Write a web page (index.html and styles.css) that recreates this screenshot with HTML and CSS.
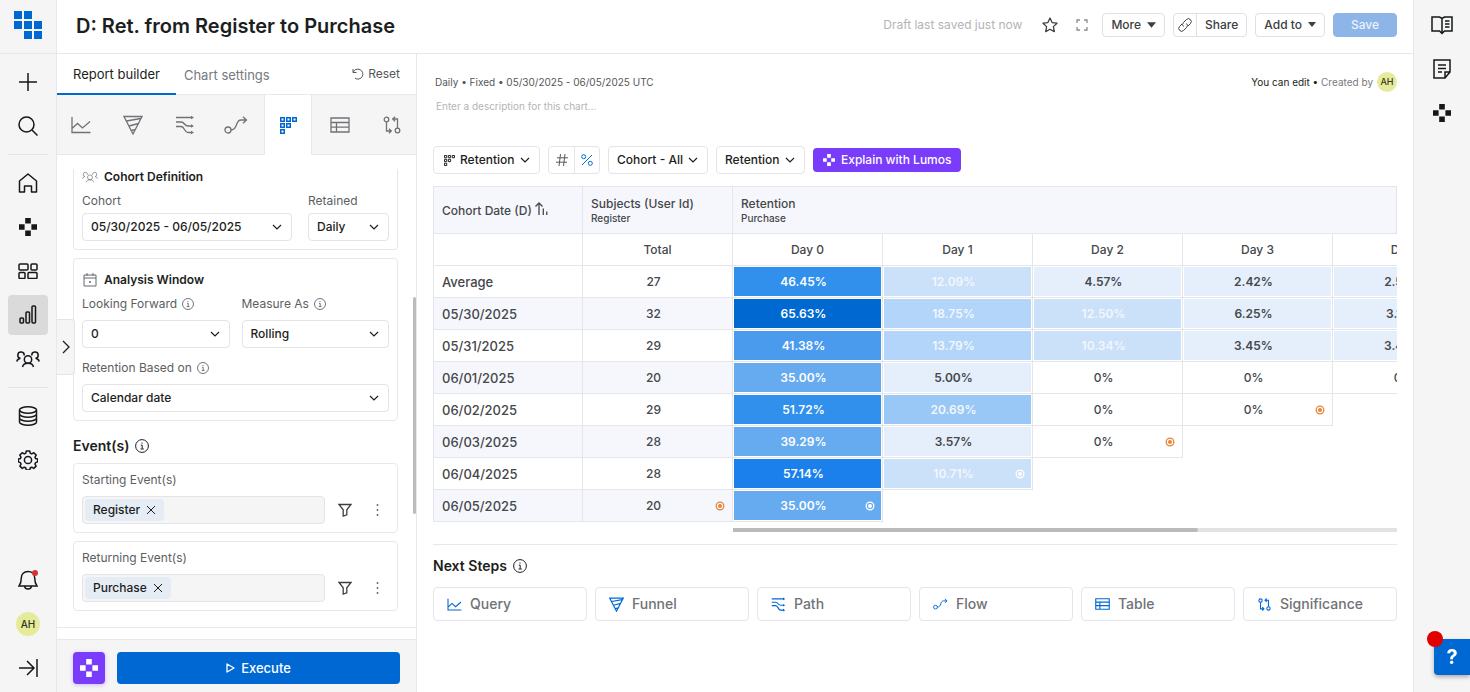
FILE: index.html
```html
<!DOCTYPE html>
<html lang="en">
<head>
  <meta charset="UTF-8">
  <meta name="viewport" content="width=device-width, initial-scale=1.0">
  <title>D: Ret. from Register to Purchase</title>
  <link rel="stylesheet" href="styles.css">
</head>
<body>
  <!-- Shared icons -->
  <svg class="sprite" aria-hidden="true">
    <symbol id="i-lumos" viewBox="0 0 18 18"><path fill="currentColor" d="M6.200 0h5.600v5.600H6.200zM0 6.200h5.600v5.600H0zM12.400 6.200H18v5.600h-5.600zM6.200 12.400h5.600V18H6.200z"/></symbol>
    <symbol id="i-line" viewBox="0 0 20 18"><path d="M1 1v15.500h18.500M1 12.500l5.500-5 5 4.500 7.500-6.500"/></symbol>
    <symbol id="i-funnel" viewBox="0 0 20 20"><path d="M1 1.500h18L10 19zM3.500 6l14-2.500M6 11l9.500-2.500M8.500 15.500l4-1"/></symbol>
    <symbol id="i-path" viewBox="0 0 20 20"><path d="M1 2.500h16M1 7h5c4 0 3 4 7 4h4M1 11.500h5c4 0 3 6 7 6h4"/><path class="fill" d="M16 .8l3 1.700-3 1.700zM16 9.300l3 1.700-3 1.700zM16 15.800l3 1.700-3 1.700z"/></symbol>
    <symbol id="i-flow" viewBox="0 0 24 18"><circle cx="4" cy="14" r="3"/><path d="M7 14c7 0 4-10 10-10h5.500M19 .8L22.500 4 19 7.200"/></symbol>
    <symbol id="i-retention" viewBox="0 0 17 17"><path d="M.75.75h3.500v3.500h-3.500zM6.750.75h3.500v3.500h-3.500zM12.750.75h3.500v3.500h-3.500zM.75 6.750h3.500v3.500h-3.500zM6.750 6.750h3.500v3.500h-3.500zM.75 12.750h3.500v3.500h-3.500z"/></symbol>
    <symbol id="i-table" viewBox="0 0 20 16"><path d="M1 1h18v14H1zM1 5.500h18M1 10.200h18M6.500 5.500V15"/></symbol>
    <symbol id="i-signif" viewBox="0 0 18 18"><circle cx="3.500" cy="3.500" r="2.300"/><circle cx="14.500" cy="14.500" r="2.300"/><path d="M3.500 6v9h4.500M6 12.700L8.300 15 6 17.300M14.500 12V3h-4.500M12 .700L9.700 3 12 5.300"/></symbol>
    <symbol id="i-people" viewBox="0 0 24 18"><circle cx="12" cy="9.500" r="3.700"/><path d="M6.500 17c.5-2.500 2.500-3.800 5.500-3.800s5 1.300 5.500 3.800M8.200 5.500a3.200 3.200 0 1 0-3.800 2.800C2.300 8.700 1.200 9.800.8 11.500M15.800 5.500a3.200 3.200 0 1 1 3.800 2.800c2.100.4 3.200 1.500 3.600 3.200"/></symbol>
    <symbol id="i-info" viewBox="0 0 14 14"><circle cx="7" cy="7" r="6.400"/><path d="M5.800 6.200h1.400v3.600M5.500 10h3.300M7 3.500v1.200"/></symbol>
    <symbol id="i-chevron" viewBox="0 0 10 6"><path d="M1 1l4 4 4-4"/></symbol>
    <symbol id="i-caret" viewBox="0 0 8 5"><path fill="currentColor" d="M0 0h8L4 5z"/></symbol>
    <symbol id="i-filter" viewBox="0 0 14 14"><path d="M1 1.500h12L8.800 6.800v5L5.200 13V6.800z"/></symbol>
    <symbol id="i-dots" viewBox="0 0 3 12"><path fill="currentColor" d="M.75.25h1.500v1.500h-1.500zM.75 5.250h1.500v1.500h-1.500zM.75 10.250h1.500v1.500h-1.500z"/></symbol>
    <symbol id="i-close" viewBox="0 0 10 10"><path d="M1 1l8 8M9 1L1 9"/></symbol>
    <symbol id="i-target" viewBox="0 0 10 10"><circle cx="5" cy="5" r="3.800"/><circle class="fill" cx="5" cy="5" r="2"/></symbol>
  </svg>

  <nav class="sidebar" aria-label="Main">
    <a class="logo" href="#" aria-label="Home page">
      <svg width="28" height="28" viewBox="0 0 28 28"><path d="M0 0h8v8H0zM10 0h8v8h-8zM0 10h8v8H0zM10 10h8v8h-8zM20 10h8v8h-8zM10 20h8v8h-8zM20 20h8v8h-8z"/></svg>
    </a>
    <button class="nav-item" aria-label="New"><svg width="18" height="18" viewBox="0 0 18 18"><path d="M9 0v18M0 9h18"/></svg></button>
    <button class="nav-item" aria-label="Search"><svg width="20" height="20" viewBox="0 0 20 20"><circle cx="8.500" cy="8.500" r="7.500"/><path d="M14 14l5.500 5.500"/></svg></button>
    <hr class="nav-divider">
    <a class="nav-item" href="#" aria-label="Home"><svg width="20" height="20" viewBox="0 0 20 20"><path d="M1.500 8L10 1l8.500 7v11h-5v-6h-7v6h-5z" stroke-linejoin="round"/></svg></a>
    <a class="nav-item" href="#" aria-label="Lumos"><svg width="18" height="18"><use href="#i-lumos"/></svg></a>
    <a class="nav-item" href="#" aria-label="Dashboards"><svg width="20" height="16" viewBox="0 0 20 16"><rect x="1" y="1" width="9" height="6" rx="1"/><rect x="13" y="1" width="6" height="6" rx="1"/><rect x="1" y="9.500" width="6" height="6" rx="1"/><rect x="10" y="9.500" width="9" height="6" rx="1"/></svg></a>
    <a class="nav-item active" href="#" aria-label="Charts"><svg width="18" height="20" viewBox="0 0 18 20"><rect x="1" y="13" width="3.500" height="5" rx="1"/><rect x="7" y="7" width="3.500" height="11" rx="1"/><rect x="13" y="1" width="3.500" height="17" rx="1"/></svg></a>
    <a class="nav-item" href="#" aria-label="Audiences"><svg width="24" height="18"><use href="#i-people"/></svg></a>
    <hr class="nav-divider">
    <a class="nav-item" href="#" aria-label="Data"><svg width="20" height="20" viewBox="0 0 20 20"><ellipse cx="10" cy="4" rx="8.500" ry="3.200"/><path d="M1.500 4v12c0 1.800 3.800 3.200 8.500 3.200s8.500-1.400 8.500-3.200V4M1.500 8c0 1.800 3.800 3.200 8.500 3.200s8.500-1.400 8.500-3.200M1.500 12c0 1.800 3.800 3.200 8.500 3.200s8.500-1.400 8.500-3.200"/></svg></a>
    <a class="nav-item" href="#" aria-label="Settings"><svg width="20" height="20" viewBox="0 0 20 20"><circle cx="10" cy="10" r="3.600"/><path d="M8.300 1h3.400l.6 2.300 1.500.6 2-1.200 2.400 2.400-1.200 2 .6 1.500 2 .5v2.800l-2 .7-.6 1.500 1.100 2-2.300 2.300-2-1.200-1.500.6-.6 2.200H8.300l-.6-2.200-1.500-.6-2 1.200-2.300-2.300 1.100-2-.6-1.500-2-.7V9.100l2-.5.6-1.500-1.200-2 2.400-2.400 2 1.200 1.500-.6z" stroke-linejoin="round"/></svg></a>
    <button class="nav-item nav-bottom" aria-label="Notifications"><svg width="20" height="20" viewBox="0 0 20 20"><path d="M1 16h18c-2-2.500-2.300-4.500-2.300-8 0-4-2.700-6.500-6.700-6.500S3.300 4 3.300 8c0 3.500-.3 5.500-2.300 8zM6.500 16c.3 4 6.700 4 7 0"/></svg><span class="dot"></span></button>
    <button class="nav-item" aria-label="Account"><span class="avatar">AH</span></button>
    <button class="nav-item" aria-label="Expand menu"><svg width="20" height="18" viewBox="0 0 20 18"><path d="M1 9h15M9 2l7 7-7 7M19 0v18"/></svg></button>
  </nav>

  <div class="page">
    <header class="topbar">
      <h1>D: Ret. from Register to Purchase</h1>
      <span class="draft">Draft last saved just now</span>
      <button class="icon-btn" aria-label="Favorite"><svg width="16" height="16" viewBox="0 0 16 16"><path d="M8 1l2.100 4.600 4.900.6-3.600 3.400.9 5L8 12.200l-4.300 2.400.9-5L1 6.200l4.900-.6z" stroke-linejoin="round"/></svg></button>
      <button class="icon-btn muted" aria-label="Full screen"><svg width="12" height="12" viewBox="0 0 12 12"><path d="M1 4V1h3M8 1h3v3M11 8v3H8M4 11H1V8"/></svg></button>
      <button class="btn">More <svg width="9" height="6"><use href="#i-caret"/></svg></button>
      <div class="btn-group">
        <button aria-label="Copy link"><svg width="16" height="16" viewBox="0 0 16 16"><path d="M6.500 9.500a2.800 2.800 0 0 1 0-4l2.800-2.900a2.800 2.800 0 0 1 4.100 4L11 9M9.500 6.500a2.800 2.800 0 0 1 0 4l-2.800 2.900a2.800 2.800 0 0 1-4.100-4L5 7"/></svg></button>
        <button>Share</button>
      </div>
      <button class="btn">Add to <svg width="8" height="5"><use href="#i-caret"/></svg></button>
      <button class="btn save" disabled>Save</button>
    </header>

    <div class="workspace">
      <section class="builder">
        <div class="tabs">
          <button class="tab active">Report builder</button>
          <button class="tab">Chart settings</button>
          <button class="reset"><svg width="12" height="12" viewBox="0 0 12 12"><path d="M1 1v3.500h3.500M1.200 4.300A5 5 0 1 1 3 10.200"/></svg>Reset</button>
        </div>
        <div class="chart-types">
          <button aria-label="Query"><svg width="20" height="18"><use href="#i-line"/></svg></button>
          <button aria-label="Funnel"><svg width="20" height="20"><use href="#i-funnel"/></svg></button>
          <button aria-label="Path"><svg width="20" height="20"><use href="#i-path"/></svg></button>
          <button aria-label="Flow"><svg width="24" height="18"><use href="#i-flow"/></svg></button>
          <button class="active" aria-label="Retention"><svg width="17" height="17"><use href="#i-retention"/></svg></button>
          <button aria-label="Table"><svg width="20" height="16"><use href="#i-table"/></svg></button>
          <button aria-label="Significance"><svg width="18" height="18"><use href="#i-signif"/></svg></button>
        </div>

        <div class="builder-body">
          <div class="card cohort-card">
            <h3><svg width="16" height="12"><use href="#i-people"/></svg>Cohort Definition</h3>
            <div class="fields cohort-fields">
              <div class="field">
                <label for="cohort">Cohort</label>
                <div class="select"><select id="cohort"><option>05/30/2025 - 06/05/2025</option></select><svg width="10" height="6"><use href="#i-chevron"/></svg></div>
              </div>
              <div class="field">
                <label for="retained">Retained</label>
                <div class="select"><select id="retained"><option>Daily</option></select><svg width="10" height="6"><use href="#i-chevron"/></svg></div>
              </div>
            </div>
          </div>

          <div class="card window-card">
            <h3><svg width="14" height="14" viewBox="0 0 14 14"><path d="M1 2h12v11H1zM1 5h12M4 0v3M10 0v3M6.500 8.500h1v1h-1z"/></svg>Analysis Window</h3>
            <div class="fields">
              <div class="field">
                <label for="forward">Looking Forward <svg width="12" height="12"><use href="#i-info"/></svg></label>
                <div class="select"><select id="forward"><option>0</option></select><svg width="10" height="6"><use href="#i-chevron"/></svg></div>
              </div>
              <div class="field">
                <label for="measure">Measure As <svg width="12" height="12"><use href="#i-info"/></svg></label>
                <div class="select"><select id="measure"><option>Rolling</option></select><svg width="10" height="6"><use href="#i-chevron"/></svg></div>
              </div>
              <div class="field wide">
                <label for="based">Retention Based on <svg width="12" height="12"><use href="#i-info"/></svg></label>
                <div class="select"><select id="based"><option>Calendar date</option></select><svg width="10" height="6"><use href="#i-chevron"/></svg></div>
              </div>
            </div>
          </div>

          <h2>Event(s) <svg width="14" height="14"><use href="#i-info"/></svg></h2>

          <div class="card event-card">
            <label for="starting">Starting Event(s)</label>
            <div class="event-row">
              <div class="event-box"><span class="chip">Register <button aria-label="Remove Register"><svg width="10" height="10"><use href="#i-close"/></svg></button></span><input id="starting" type="text"></div>
              <button class="icon-btn" aria-label="Filter"><svg width="14" height="14"><use href="#i-filter"/></svg></button>
              <button class="icon-btn" aria-label="Options"><svg width="3" height="12"><use href="#i-dots"/></svg></button>
            </div>
          </div>
          <div class="card event-card">
            <label for="returning">Returning Event(s)</label>
            <div class="event-row">
              <div class="event-box"><span class="chip">Purchase <button aria-label="Remove Purchase"><svg width="10" height="10"><use href="#i-close"/></svg></button></span><input id="returning" type="text"></div>
              <button class="icon-btn" aria-label="Filter"><svg width="14" height="14"><use href="#i-filter"/></svg></button>
              <button class="icon-btn" aria-label="Options"><svg width="3" height="12"><use href="#i-dots"/></svg></button>
            </div>
          </div>
          <hr class="section-line">
        </div>

        <div class="builder-footer">
          <button class="lumos-btn" aria-label="Ask Lumos"><svg width="18" height="18"><use href="#i-lumos"/></svg></button>
          <button class="execute"><svg width="9" height="10" viewBox="0 0 9 10"><path d="M1 1l7 4-7 4z" stroke-linejoin="round"/></svg>Execute</button>
        </div>
        <div class="builder-scroll"></div>
        <button class="collapse-handle" aria-label="Collapse builder"><svg width="8" height="14" viewBox="0 0 8 14"><path d="M1 1l6 6-6 6"/></svg></button>
      </section>

      <main class="report">
        <div class="meta">
          <span>Daily • Fixed • 05/30/2025 - 06/05/2025 UTC</span>
          <span class="owner"><b>You can edit •</b> Created by</span>
          <span class="avatar small">AH</span>
        </div>
        <input class="description" type="text" aria-label="Description" placeholder="Enter a description for this chart…">

        <div class="toolbar">
          <div class="select tool lead">
            <svg class="lead-icon" width="11" height="11"><use href="#i-retention"/></svg>
            <select aria-label="Chart view"><option>Retention</option></select>
            <svg width="10" height="6"><use href="#i-chevron"/></svg>
          </div>
          <div class="toggle">
            <button aria-label="Show numbers"><svg width="12" height="12" viewBox="0 0 12 12"><path d="M4.500 0L3 12M9 0L7.500 12M1 3.800h11M0 8.200h11"/></svg></button>
            <button class="on" aria-label="Show percentages"><svg width="12" height="12" viewBox="0 0 12 12"><circle cx="2.700" cy="2.700" r="2"/><circle cx="9.300" cy="9.300" r="2"/><path d="M11 1L1 11"/></svg></button>
          </div>
          <div class="select tool"><select aria-label="Cohorts"><option>Cohort - All</option></select><svg width="10" height="6"><use href="#i-chevron"/></svg></div>
          <div class="select tool"><select aria-label="Metric"><option>Retention</option></select><svg width="10" height="6"><use href="#i-chevron"/></svg></div>
          <button class="explain"><svg width="12" height="12"><use href="#i-lumos"/></svg>Explain with Lumos</button>
        </div>

        <div class="table-wrap">
          <table class="cohorts">
            <thead>
              <tr class="groups">
                <th>Cohort Date (D) <svg width="13" height="13" viewBox="0 0 13 13"><path d="M4 13V1M.500 4.500L4 1l3.500 3.500M8.300 13V6.500M11.800 13V9.500"/></svg></th>
                <th>Subjects (User Id)<small>Register</small></th>
                <th colspan="5">Retention<small>Purchase</small></th>
              </tr>
              <tr class="days">
                <th></th><th>Total</th><th>Day 0</th><th>Day 1</th><th>Day 2</th><th>Day 3</th><th>Day 4</th>
              </tr>
            </thead>
            <tbody>
              <tr><th>Average</th><td>27</td><td class="h7">46.45%</td><td class="h2">12.09%</td><td class="h1">4.57%</td><td class="h1">2.42%</td><td class="h1">2.50%</td></tr>
              <tr><th>05/30/2025</th><td>32</td><td class="h9">65.63%</td><td class="h3">18.75%</td><td class="h2">12.50%</td><td class="h1">6.25%</td><td class="h1">3.13%</td></tr>
              <tr><th>05/31/2025</th><td>29</td><td class="h6">41.38%</td><td class="h3">13.79%</td><td class="h2">10.34%</td><td class="h1">3.45%</td><td class="h1">3.45%</td></tr>
              <tr><th>06/01/2025</th><td>20</td><td class="h5">35.00%</td><td class="h1">5.00%</td><td>0%</td><td>0%</td><td>0%</td></tr>
              <tr><th>06/02/2025</th><td>29</td><td class="h7">51.72%</td><td class="h4">20.69%</td><td>0%</td><td>0%<svg class="mark" width="10" height="10"><use href="#i-target"/></svg></td></tr>
              <tr><th>06/03/2025</th><td>28</td><td class="h5">39.29%</td><td class="h1">3.57%</td><td>0%<svg class="mark" width="10" height="10"><use href="#i-target"/></svg></td></tr>
              <tr><th>06/04/2025</th><td>28</td><td class="h8">57.14%</td><td class="h2">10.71%<svg class="mark" width="10" height="10"><use href="#i-target"/></svg></td></tr>
              <tr><th>06/05/2025</th><td>20<svg class="mark" width="10" height="10"><use href="#i-target"/></svg></td><td class="h5">35.00%<svg class="mark" width="10" height="10"><use href="#i-target"/></svg></td></tr>
            </tbody>
          </table>
        </div>
        <div class="h-scroll"><div class="thumb"></div></div>

        <h2 class="next-title">Next Steps <svg width="14" height="14"><use href="#i-info"/></svg></h2>
        <div class="next-steps">
          <button><svg width="15" height="13"><use href="#i-line"/></svg>Query</button>
          <button><svg width="15" height="15"><use href="#i-funnel"/></svg>Funnel</button>
          <button><svg width="15" height="15"><use href="#i-path"/></svg>Path</button>
          <button><svg width="15" height="12"><use href="#i-flow"/></svg>Flow</button>
          <button><svg width="15" height="12"><use href="#i-table"/></svg>Table</button>
          <button><svg width="15" height="13"><use href="#i-signif"/></svg>Significance</button>
        </div>
      </main>
    </div>
  </div>

  <aside class="rail">
    <button class="nav-item" aria-label="Guide"><svg width="22" height="20" viewBox="0 0 22 20"><path d="M1 2h7.500L11 3.500 13.500 2H21v14h-7.500L11 18.500 8.500 16H1zM11 3.500V18M14 6h4.500M14 9h4.500M14 12h4.500"/></svg></button>
    <button class="nav-item" aria-label="Notes"><svg width="18" height="20" viewBox="0 0 18 20"><path d="M1 1h16v12l-5 6H1zM17 13h-5v6M5 6h8M5 9.500h8M5 13h4"/></svg></button>
    <button class="nav-item" aria-label="Lumos"><svg width="18" height="18"><use href="#i-lumos"/></svg></button>
  </aside>

  <button class="help" aria-label="Help">?<span class="help-dot"></span></button>
</body>
</html>
```
FILE: styles.css
```css
* {
  box-sizing: border-box;
}
body {
  margin: 0;
  display: flex;
  height: 100vh;
  overflow: hidden;
  font-family: Inter, "Liberation Sans", sans-serif;
  font-size: 13px;
  line-height: 16px;
  color: #1c1e21;
  background-color: #fff;
}
button, input, select {
  font: inherit;
  color: inherit;
  margin: 0;
  padding: 0;
  border: none;
  background: none;
}
button, select {
  cursor: pointer;
}
h1, h2, h3 {
  margin: 0;
  font-weight: 600;
}
hr {
  border: none;
  margin: 0;
}
svg {
  flex: none;
  fill: none;
  stroke: currentColor;
  stroke-width: 1.3;
}
.fill {
  fill: currentColor;
  stroke: none;
}
.sprite {
  display: none;
}
#i-lumos, #i-caret, #i-dots, .logo svg {
  stroke: none;
}
#i-retention {
  stroke-width: 1.5;
}

/* Side navigation */
.sidebar, .rail {
  flex: none;
  width: 57px;
  display: flex;
  flex-direction: column;
  background-color: #f5f5f5;
}
.sidebar {
  gap: 4px;
  padding-bottom: 4px;
  border-right: 1px solid #e8e8ea;
}
.logo {
  display: flex;
  align-items: center;
  justify-content: center;
  height: 54px;
  padding-bottom: 4px;
  margin-bottom: 4px;
  border-bottom: 1px solid #e8e8ea;
}
.logo svg {
  fill: #0068d2;
}
.nav-item {
  position: relative;
  display: flex;
  align-items: center;
  justify-content: center;
  width: 40px;
  height: 40px;
  margin: 0 8px;
  border-radius: 4px;
  color: #15171a;
}
.nav-item svg {
  stroke-width: 1.5;
}
.nav-item.active {
  background-color: #dadada;
}
.nav-divider {
  height: 1px;
  margin: 4px 8px;
  background-color: #e4e4e6;
}
.nav-bottom {
  margin-top: auto;
}
.dot {
  position: absolute;
  top: 10px;
  right: 10px;
  width: 6px;
  height: 6px;
  border-radius: 50%;
  background-color: #d13438;
}
.avatar {
  display: flex;
  align-items: center;
  justify-content: center;
  width: 24px;
  height: 24px;
  border-radius: 50%;
  background-color: #e6eb9b;
  color: #33361a;
  font-size: 10px;
  font-weight: 500;
}
.avatar.small {
  width: 20px;
  height: 20px;
  font-size: 9px;
}
.rail {
  gap: 4px;
  padding-top: 5px;
  border-left: 1px solid #e8e8ea;
}

/* Top bar */
.page {
  flex: 1;
  min-width: 0;
  display: flex;
  flex-direction: column;
}
.topbar {
  display: flex;
  align-items: center;
  gap: 8px;
  height: 54px;
  padding: 0 16px 4px 19px;
  border-bottom: 1px solid #e8e8ea;
}
.topbar h1 {
  flex: 1;
  font-size: 20px;
  line-height: 24px;
  padding-top: 2px;
}
.draft {
  color: #b4b4b6;
  margin-right: 8px;
  font-size: 12px;
}
.icon-btn {
  display: flex;
  align-items: center;
  justify-content: center;
  width: 24px;
  height: 24px;
  color: #3c3e42;
}
.icon-btn.muted {
  color: #8a8c90;
}
.btn, .btn-group {
  display: flex;
  align-items: center;
  justify-content: center;
  gap: 6px;
  height: 24px;
  padding: 0 8px;
  border: 1px solid #e0e0e2;
  border-radius: 4px;
  background-color: #fff;
  color: #3c3e42;
  font-size: 12px;
  font-weight: 500;
}
.btn-group {
  padding: 0;
  gap: 0;
}
.btn-group button {
  display: flex;
  align-items: center;
  height: 22px;
  padding: 0 8px;
}
.btn-group button:first-child {
  padding: 0 3px;
  border-right: 1px solid #e0e0e2;
}
.btn-group svg {
  stroke-width: 1;
}
.btn.save {
  width: 64px;
  border-color: #8eb5e8;
  background-color: #8eb5e8;
  color: #eaf2fc;
}

/* Report builder */
.workspace {
  flex: 1;
  min-height: 0;
  display: flex;
}
.builder {
  position: relative;
  flex: none;
  width: 360px;
  display: flex;
  flex-direction: column;
  border-right: 1px solid #e8e8ea;
}
.tabs {
  display: flex;
  height: 41px;
  border-bottom: 1px solid #e8e8ea;
}
.tab {
  height: 41px;
  color: #77797d;
  padding: 0 8px;
}
.tab.active {
  padding: 0 16px;
  color: #1c1e21;
  border-bottom: 2px solid #0068d2;
}
.reset {
  display: flex;
  align-items: center;
  gap: 4px;
  margin-left: auto;
  padding-right: 16px;
  color: #55575b;
  font-size: 12px;
}
.reset svg {
  stroke-width: 1;
}
.chart-types {
  display: flex;
  justify-content: space-between;
  height: 60px;
  background-color: #f5f5f5;
  border-bottom: 1px solid #e8e8ea;
}
.chart-types button {
  display: flex;
  align-items: center;
  justify-content: center;
  width: 48px;
  height: 60px;
  color: #707276;
}
.chart-types .active {
  color: #0068d2;
  background-color: #fff;
  border: solid #e8e8ea;
  border-width: 0 1px;
}
.builder-body {
  flex: 1;
  min-height: 0;
  overflow: hidden;
  margin-top: 14px;
  padding: 0 18px 0 16px;
}
.card {
  border: 1px solid #e8e8ea;
  border-radius: 4px;
  margin-bottom: 8px;
  padding: 8px;
}
.cohort-card {
  border-top: none;
  border-radius: 0 0 4px 4px;
  padding-top: 0;
}
.card h3 {
  display: flex;
  align-items: center;
  gap: 6px;
  height: 16px;
  font-size: 12px;
}
.card h3 svg {
  width: 16px;
  color: #66686c;
  stroke-width: 1;
}
.window-card h3 {
  margin-top: 5px;
}
.fields {
  display: grid;
  grid-template-columns: 1fr 1fr;
  gap: 12px;
  margin-top: 8px;
}
.cohort-fields {
  grid-template-columns: 210px 1fr;
  gap: 16px;
}
.field.wide {
  grid-column: 1 / -1;
}
label {
  display: flex;
  align-items: center;
  gap: 5px;
  font-size: 12px;
  color: #5c5e62;
}
.field label {
  margin-bottom: 8px;
}
.cohort-fields label {
  margin-bottom: 4px;
}
label svg, h2 svg {
  stroke-width: 1;
}
.select {
  display: grid;
  align-items: center;
  height: 28px;
  border: 1px solid #e4e4e6;
  border-radius: 4px;
  background-color: #fff;
}
.select select, .select svg {
  grid-area: 1 / 1;
}
.select select {
  appearance: none;
  height: 26px;
  padding: 0 24px 0 8px;
  font-size: 12px;
  font-weight: 500;
}
.select svg {
  justify-self: end;
  margin-right: 9px;
  pointer-events: none;
  stroke-width: 1.2;
}
.builder h2 {
  display: flex;
  align-items: center;
  gap: 6px;
  font-size: 14px;
  height: 18px;
  margin: 16px 0 8px;
}
.event-row {
  display: flex;
  align-items: center;
  gap: 8px;
  margin-top: 8px;
}
.event-box {
  flex: 1;
  min-width: 0;
  display: flex;
  align-items: center;
  height: 28px;
  padding: 2px;
  border: 1px solid #e4e4e6;
  border-radius: 4px;
  background-color: #f5f5f5;
}
.event-box input {
  flex: 1;
  min-width: 0;
}
.chip {
  display: flex;
  align-items: center;
  gap: 6px;
  height: 22px;
  padding: 0 8px;
  border-radius: 4px;
  background-color: #e6ecf4;
  font-size: 12px;
  font-weight: 500;
}
.chip button {
  display: flex;
}
.chip svg {
  stroke-width: 1;
}
.section-line {
  height: 1px;
  margin: 16px -18px 0 -16px;
  background-color: #e8e8ea;
}
.builder-footer {
  display: flex;
  gap: 12px;
  height: 53px;
  padding: 12px 16px 8px;
  background-color: #f5f5f5;
  border-top: 1px solid #e8e8ea;
}
.lumos-btn {
  display: flex;
  align-items: center;
  justify-content: center;
  width: 32px;
  height: 32px;
  border-radius: 4px;
  background-color: #793cfb;
  color: #fff;
  box-shadow: 0 1px 4px rgba(121, 60, 251, 0.3);
}
.execute {
  flex: 1;
  display: flex;
  align-items: center;
  justify-content: center;
  gap: 6px;
  height: 32px;
  border-radius: 4px;
  background-color: #0068d2;
  color: #fff;
  font-weight: 500;
}
.builder-scroll {
  position: absolute;
  top: 243px;
  right: 0;
  width: 3px;
  height: 217px;
  border-radius: 2px;
  background-color: #bcbcbe;
}
.collapse-handle {
  position: absolute;
  top: 265px;
  left: 0;
  display: flex;
  align-items: center;
  justify-content: center;
  width: 18px;
  height: 56px;
  background-color: #f5f5f5;
  border: 1px solid #e4e4e6;
  border-left: none;
  border-radius: 0 4px 4px 0;
}

/* Report */
.report {
  flex: 1;
  min-width: 0;
  padding: 16px;
}
.meta {
  display: flex;
  align-items: center;
  height: 24px;
  padding-left: 2px;
  font-size: 10px;
  color: #55575b;
}
.owner {
  margin-left: auto;
  padding-right: 4px;
  color: #77797d;
}
.owner b {
  font-weight: 400;
  color: #1c1e21;
}
.description {
  display: block;
  width: 100%;
  height: 16px;
  margin-top: 4px;
  padding-left: 3px;
  font-size: 10px;
}
.description::placeholder {
  color: #b4b4b6;
}
.toolbar {
  display: flex;
  align-items: center;
  gap: 8px;
  margin-top: 32px;
}
.tool.lead select {
  padding-left: 26px;
}
.select .lead-icon {
  justify-self: start;
  margin-left: 10px;
}
.toggle {
  display: flex;
  height: 28px;
  border: 1px solid #e4e4e6;
  border-radius: 4px;
}
.toggle button {
  display: flex;
  align-items: center;
  justify-content: center;
  width: 25px;
  color: #55575b;
}
.toggle .on {
  color: #0068d2;
  border-left: 1px solid #e4e4e6;
}
.toggle svg {
  stroke-width: 1;
}
.explain {
  display: flex;
  align-items: center;
  gap: 6px;
  height: 24px;
  padding: 0 10px;
  border-radius: 4px;
  background-color: #793cfb;
  color: #fff;
  font-size: 12px;
  font-weight: 500;
}
.table-wrap {
  position: relative;
  overflow: hidden;
  margin-top: 12px;
}
.table-wrap::after {
  content: "";
  position: absolute;
  top: 0;
  right: 0;
  width: 1px;
  height: 48px;
  background-color: #e4e6ea;
}
.cohorts {
  width: 1050px;
  table-layout: fixed;
  border-collapse: separate;
  border-spacing: 0;
  color: #45474b;
  font-size: 12px;
}
.cohorts th, .cohorts td {
  position: relative;
  height: 32px;
  padding: 0 8px;
  border-right: 1px solid #e4e6ea;
  border-bottom: 1px solid #e4e6ea;
  text-align: center;
  font-weight: 500;
}
.cohorts th:first-child {
  border-left: 1px solid #e4e6ea;
}
.cohorts .groups th {
  height: 48px;
  border-top: 1px solid #e4e6ea;
  background-color: #f6f7fc;
}
.cohorts .groups th, .cohorts tbody th {
  text-align: left;
}
.cohorts tbody th {
  font-size: 13px;
}
.cohorts small {
  display: block;
  font-size: 10px;
  line-height: 12px;
}
.cohorts td {
  padding-right: 16px;
}
.cohorts tbody tr:nth-child(even) th,
.cohorts tbody tr:nth-child(even) td:nth-child(2) {
  background-color: #f6f7fc;
}
.cohorts .mark {
  position: absolute;
  top: 11px;
  right: 7px;
  color: #e5863c;
}
.cohorts [class^="h"] {
  box-shadow: inset 0 0 0 1px #fff;
  color: #fff;
  font-weight: 600;
}
.cohorts [class^="h"] .mark {
  color: #fff;
}
.cohorts .h1 { background-color: #e5effc; color: #45474b; }
.cohorts .h2 { background-color: #cbe0f9; color: #f2f7fd; }
.cohorts .h3 { background-color: #b3d5fa; color: #f2f7fd; }
.cohorts .h4 { background-color: #99c7f6; color: #f2f7fd; }
.cohorts .h5 { background-color: #66aaf0; }
.cohorts .h6 { background-color: #4a9bee; }
.cohorts .h7 { background-color: #3090ec; }
.cohorts .h8 { background-color: #1b80ec; }
.cohorts .h9 { background-color: #0069d1; }
.h-scroll {
  height: 4px;
  margin: 6px 0 12px 300px;
  background-color: #e2e2e2;
}
.h-scroll .thumb {
  width: 70%;
  height: 4px;
  border-radius: 0 2px 2px 0;
  background-color: #b9bbba;
}
.next-title {
  display: flex;
  align-items: center;
  gap: 6px;
  padding-top: 12px;
  border-top: 1px solid #e8e8ea;
  font-size: 14px;
  line-height: 18px;
}
.next-steps {
  display: grid;
  grid-template-columns: repeat(6, 1fr);
  gap: 8px;
  margin-top: 12px;
}
.next-steps button {
  display: flex;
  align-items: center;
  gap: 8px;
  height: 34px;
  padding: 0 13px;
  border: 1px solid #e4e6ec;
  border-radius: 4px;
  color: #707276;
  font-size: 14px;
  font-weight: 500;
}
.next-steps svg {
  color: #0068d2;
  stroke-width: 1.5;
}

/* Help launcher */
.help {
  position: fixed;
  right: 0;
  bottom: 17px;
  width: 36px;
  height: 36px;
  border-radius: 4px 0 0 4px;
  background-color: #0068d2;
  color: #fff;
  font-size: 20px;
  font-weight: 700;
  box-shadow: 0 2px 4px rgba(0, 0, 0, 0.3);
}
.help-dot {
  position: absolute;
  top: -8px;
  left: -7px;
  width: 16px;
  height: 16px;
  border-radius: 50%;
  background-color: #e00000;
}
```
